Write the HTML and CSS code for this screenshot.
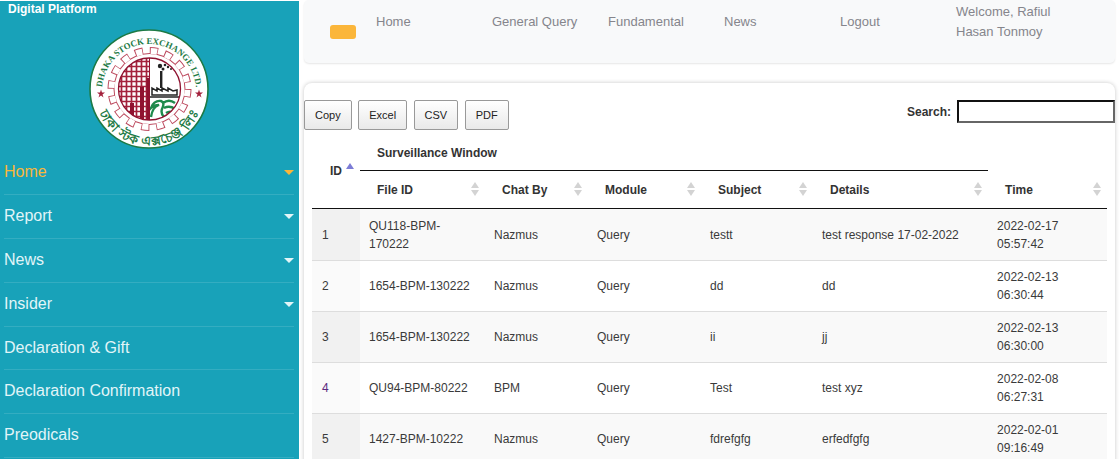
FILE: index.html
```html
<!DOCTYPE html>
<html lang="en">
<head>
<meta charset="utf-8">
<title>Digital Platform</title>
<link rel="stylesheet" href="styles.css">
</head>
<body>
<aside class="sidebar">
  <div class="brand">Digital Platform</div>
  <svg class="logo" viewBox="0 0 120 120" width="120" height="120" aria-label="Dhaka Stock Exchange logo">
    <defs>
      <path id="arcTop" d="M13 62 A47 47 0 0 1 107 62"/>
      <path id="arcBottom" d="M6.500 70 A54 54 0 0 0 113.500 70"/>
      <clipPath id="leftHalf"><path d="M60.5 29 A31 31 0 0 0 60.5 91 Z"/></clipPath>
      <clipPath id="rightHalf"><path d="M60.5 29 A31 31 0 0 1 60.5 91 Z"/></clipPath>
      <pattern id="grid" width="5" height="5" patternUnits="userSpaceOnUse">
        <path d="M0 2.5H5M2.5 0V5" stroke="#a3213c" stroke-width="1.7" fill="none"/>
      </pattern>
    </defs>
    <circle cx="60" cy="60" r="59" fill="#fff" stroke="#1d7a45" stroke-width="1.6"/>
    <circle cx="60.5" cy="60" r="38.500" fill="none" stroke="#bd4a5f" stroke-width="7" stroke-dasharray="8.200 6.920"/>
    <circle cx="60.5" cy="60" r="36" fill="#bd4a5f"/>
    <circle cx="60.5" cy="60" r="38" fill="none" stroke="#fff" stroke-width="6" stroke-dasharray="6.400 8.530" stroke-dashoffset="-0.900"/>
    <circle cx="60.5" cy="60" r="35" fill="#fff"/>
    <g clip-path="url(#leftHalf)">
      <rect x="29" y="29" width="32" height="62" fill="url(#grid)"/>
      <path d="M41 74h4v17h-4zM51 58h4v33h-4zM57.500 49h3.500v42h-3.500z" fill="#8f1230"/>
    </g>
    <g clip-path="url(#rightHalf)">
      <path d="M71 42h2.400v17H71z" fill="#222"/>
      <g fill="#222">
        <circle cx="71" cy="37" r="2.200"/><circle cx="74" cy="40" r="1.500"/><circle cx="76" cy="36" r="1.300"/>
        <circle cx="79" cy="38" r="1.200"/><circle cx="82" cy="40" r="1"/><circle cx="80" cy="35" r="0.900"/><circle cx="84" cy="37" r="0.800"/>
      </g>
      <path d="M63 66V59l5 3v-3l5 3v-3l6 3v-3l5 3 4-1v5z" fill="#fff" stroke="#222" stroke-width="1.500"/>
      <path d="M61 68H90" stroke="#222" stroke-width="1.500"/>
      <path d="M62 88c1-7 3-10 8-12-4 0-6 1-8 3 1-4 5-8 10-7 3 1 3 4 1 8-1 3 0 6 2 8M74 74c4-3 8-3 12 0M75 79c4-2 7-2 11 1M77 84c3-2 5-2 8 0" fill="none" stroke="#1f8a4c" stroke-width="2.400"/>
    </g>
    <circle cx="60.5" cy="60" r="31" fill="none" stroke="#8f1230" stroke-width="1.300"/>
    <path d="M60.500 29V91" stroke="#8f1230" stroke-width="1"/>
    <path d="M12 60.500l1 3h3l-2.500 1.900 1 3-2.500-1.900-2.500 1.900 1-3L8 63.500h3zM110 60.500l1 3h3l-2.500 1.900 1 3-2.500-1.900-2.500 1.900 1-3-2.500-1.900h3z" fill="#a3213c"/>
    <text class="logo-top"><textPath href="#arcTop" startOffset="50%" text-anchor="middle">DHAKA STOCK EXCHANGE LTD.</textPath></text>
    <text class="logo-bottom"><textPath href="#arcBottom" startOffset="50%" text-anchor="middle">ঢাকা স্টক এক্সচেঞ্জ লিঃ</textPath></text>
  </svg>
  <nav class="side-menu">
    <a class="side-item active">Home<i class="caret"></i></a>
    <a class="side-item">Report<i class="caret"></i></a>
    <a class="side-item">News<i class="caret"></i></a>
    <a class="side-item">Insider<i class="caret"></i></a>
    <a class="side-item">Declaration &amp; Gift</a>
    <a class="side-item">Declaration Confirmation</a>
    <a class="side-item">Preodicals</a>
  </nav>
</aside>
<main class="main">
  <header class="topbar">
    <button class="toggle" aria-label="Toggle menu"></button>
    <nav class="top-links">
      <a>Home</a>
      <a>General Query</a>
      <a>Fundamental</a>
      <a>News</a>
      <a>Logout</a>
      <a class="welcome">Welcome, Rafiul Hasan Tonmoy</a>
    </nav>
  </header>
  <section class="card">
    <div class="tools">
      <div class="buttons">
        <button class="dt-btn">Copy</button>
        <button class="dt-btn">Excel</button>
        <button class="dt-btn">CSV</button>
        <button class="dt-btn">PDF</button>
      </div>
      <label class="search">Search: <input type="search"></label>
    </div>
    <table class="grid-table">
      <colgroup>
        <col class="c-id"><col class="c-file"><col class="c-chat"><col class="c-module"><col class="c-subject"><col class="c-details"><col class="c-time">
      </colgroup>
      <thead>
        <tr class="head-top">
          <th rowspan="2" class="th-id">ID<i class="sort-asc"></i></th>
          <th colspan="5" class="group">Surveillance Window</th>
          <th class="blank"></th>
        </tr>
        <tr class="head-sub">
          <th>File ID<i class="sort"></i></th>
          <th>Chat By<i class="sort"></i></th>
          <th>Module<i class="sort"></i></th>
          <th>Subject<i class="sort"></i></th>
          <th>Details<i class="sort"></i></th>
          <th>Time<i class="sort"></i></th>
        </tr>
      </thead>
      <tbody>
        <tr class="odd"><td class="id">1</td><td>QU118-BPM-170222</td><td>Nazmus</td><td>Query</td><td>testt</td><td>test response 17-02-2022</td><td>2022-02-17 05:57:42</td></tr>
        <tr><td class="id">2</td><td>1654-BPM-130222</td><td>Nazmus</td><td>Query</td><td>dd</td><td>dd</td><td>2022-02-13 06:30:44</td></tr>
        <tr class="odd"><td class="id">3</td><td>1654-BPM-130222</td><td>Nazmus</td><td>Query</td><td>ii</td><td>jj</td><td>2022-02-13 06:30:00</td></tr>
        <tr><td class="id visited">4</td><td>QU94-BPM-80222</td><td>BPM</td><td>Query</td><td>Test</td><td>test xyz</td><td>2022-02-08 06:27:31</td></tr>
        <tr class="odd"><td class="id">5</td><td>1427-BPM-10222</td><td>Nazmus</td><td>Query</td><td>fdrefgfg</td><td>erfedfgfg</td><td>2022-02-01 09:16:49</td></tr>
      </tbody>
    </table>
  </section>
</main>
</body>
</html>
```
FILE: styles.css
```css
html, body { margin: 0; height: 100%; overflow: hidden; background: #fff; }
body { display: flex; align-items: flex-start; font-family: "Liberation Sans", Arial, sans-serif; font-size: 12px; color: #333; }

.sidebar { flex: 0 0 299px; height: 458px; margin-top: 1px; background: #18a2b9; overflow: hidden; }
.brand { padding: 1px 0 0 8px; height: 17px; line-height: 15px; font-size: 12px; font-weight: 700; color: #fff; }
.logo { display: block; margin: 10px 0 0 89px; }
.logo-top { font-family: "Liberation Serif", serif; font-weight: 700; font-size: 8.8px; fill: #1d7a45; }
.logo-bottom { font-family: "Noto Sans", sans-serif; font-weight: 700; font-size: 13px; letter-spacing: .6px; fill: #1d7a45; }

.side-menu { display: flex; flex-direction: column; padding: 2px 5px 0 4px; }
.side-item { position: relative; display: block; height: 42.9px; line-height: 42px; font-size: 16px; color: #e2f5f8; border-bottom: 1px solid rgba(255,255,255,.12); }
.side-item.active { color: #fbb63a; }
.caret { position: absolute; right: 0; top: 19px; width: 0; height: 0; border-style: solid; border-width: 5px 5px 0; border-color: #e2f5f8 transparent transparent; }
.active .caret { border-top-color: #fbb63a; }

.main { flex: 1; min-width: 0; padding: 0 5px; }
.topbar { display: flex; align-items: flex-start; height: 63px; padding-left: 26px; background: #f8f9fa; border-radius: 5px; box-shadow: 0 1px 2px rgba(0,0,0,.1); }
.toggle { flex: none; width: 26px; height: 14px; margin: 25px 20px 0 0; padding: 0; border: 0; border-radius: 3px; background: #fbb63a; }
.top-links { display: grid; grid-template-columns: repeat(6, 116px); align-items: center; height: 44px; font-size: 13px; line-height: 20px; color: #85858c; }
.welcome { width: 105px; }

.card { margin-top: 20px; height: 400px; padding-top: 17px; background: #fff; border-radius: 8px; box-shadow: 0 0 4px rgba(0,0,0,.22); }
.tools { display: flex; justify-content: space-between; align-items: flex-start; }
.buttons { display: flex; gap: 6.5px; }
.dt-btn { height: 30px; padding: 0 10px; border: 1px solid #999; border-radius: 2px; background: linear-gradient(#fff, #e9e9e9); font-family: "Liberation Sans", Arial, sans-serif; font-size: 11px; color: #222; }
.search { display: flex; align-items: flex-start; gap: 6px; font-weight: 700; line-height: 24px; color: #333; }
.search input { box-sizing: border-box; width: 158px; height: 23px; margin: 0; padding: 0; border: 2px inset #666; background: #fff; }

.grid-table { width: 795px; margin: 2px 8px 0; border-collapse: separate; border-spacing: 0; table-layout: fixed; }
.c-id { width: 48px; } .c-file { width: 125px; } .c-chat { width: 103px; } .c-module { width: 113px; } .c-subject { width: 112px; } .c-details { width: 175px; } .c-time { width: 119px; }

th { position: relative; padding: 0 0 0 17px; text-align: left; font-weight: 700; color: #333; }
.head-top th { height: 38px; }
.head-top .group { padding-top: 3px; height: 35px; border-bottom: 1px solid #111; }
.head-top .blank { border-bottom: 0; }
.head-sub th { height: 37px; border-bottom: 1px solid #111; }
.th-id { padding-left: 18px; padding-top: 2px; border-bottom: 1px solid #111; }

.sort, .sort-asc { position: absolute; right: 5px; width: 10px; height: 14px; }
.sort { top: 11px; }
.sort::before, .sort::after, .sort-asc::before { content: ""; position: absolute; left: 1px; border-left: 4px solid transparent; border-right: 4px solid transparent; }
.sort::before { top: 0; border-bottom: 6px solid #d3d3d3; }
.sort::after { bottom: 0; border-top: 6px solid #d3d3d3; }
.sort-asc { top: 31px; }
.sort-asc::before { top: 0; border-bottom: 6px solid #7c7cd6; }

td { height: 36px; padding: 7px 9px; border-bottom: 1px solid #ddd; line-height: 18px; color: #3a3a3a; vertical-align: middle; }
tbody tr:first-child td { height: 37px; }
td.id { padding-left: 10px; background: #fafafa; }
.odd td { background: #f9f9f9; }
.odd td.id { background: #f1f1f1; }
.visited { color: #5a2a7f; }
```
